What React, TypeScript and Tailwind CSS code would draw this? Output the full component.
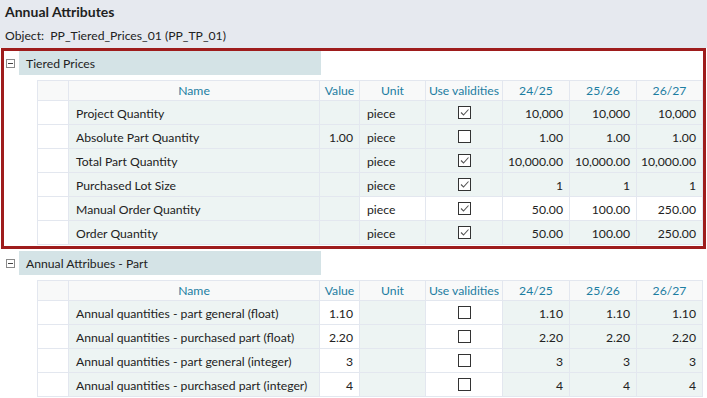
import React from 'react';

type Row = { name: string; value: string; unit: string; check: boolean; vals: string[]; whiteValue?: boolean; whiteUnit?: boolean; whiteCheck?: boolean; whiteVals?: boolean };

const tieredRows: Row[] = [
  { name: 'Project Quantity', value: '', unit: 'piece', check: true, vals: ['10,000', '10,000', '10,000'] },
  { name: 'Absolute Part Quantity', value: '1.00', unit: 'piece', check: false, vals: ['1.00', '1.00', '1.00'] },
  { name: 'Total Part Quantity', value: '', unit: 'piece', check: true, vals: ['10,000.00', '10,000.00', '10,000.00'] },
  { name: 'Purchased Lot Size', value: '', unit: 'piece', check: true, vals: ['1', '1', '1'] },
  { name: 'Manual Order Quantity', value: '', unit: 'piece', check: true, vals: ['50.00', '100.00', '250.00'], whiteUnit: true, whiteCheck: true, whiteVals: true },
  { name: 'Order Quantity', value: '', unit: 'piece', check: true, vals: ['50.00', '100.00', '250.00'] },
];

const partRows: Row[] = [
  { name: 'Annual quantities - part general (float)', value: '1.10', unit: '', check: false, vals: ['1.10', '1.10', '1.10'], whiteValue: true, whiteCheck: true },
  { name: 'Annual quantities - purchased part (float)', value: '2.20', unit: '', check: false, vals: ['2.20', '2.20', '2.20'], whiteValue: true, whiteCheck: true },
  { name: 'Annual quantities - part general (integer)', value: '3', unit: '', check: false, vals: ['3', '3', '3'], whiteValue: true, whiteCheck: true },
  { name: 'Annual quantities - purchased part (integer)', value: '4', unit: '', check: false, vals: ['4', '4', '4'], whiteValue: true, whiteCheck: true },
];

const line = 'border-r border-b border-[#e3e7ef]';

const CheckBox = ({ checked }: { checked: boolean }) => (
  <div className="w-[13px] h-[13px] border border-[#333] bg-white flex items-center justify-center">
    {checked && (
      <svg width="11" height="11" viewBox="0 0 11 11">
        <path d="M2 5.5 L4.5 8 L9.5 2.5" fill="none" stroke="#555" strokeWidth="1.1" />
      </svg>
    )}
  </div>
);

const Table = ({ rows }: { rows: Row[] }) => {
  const headers = ['Name', 'Value', 'Unit', 'Use validities', '24/25', '25/26', '26/27'];
  const bg = (white?: boolean) => (white ? 'bg-white' : 'bg-[#edf4f3]');
  return (
    <div className="grid grid-cols-[31px_251px_40px_66px_77px_67px_67px_66px] border-l border-t border-[#e3e7ef] w-[666px]">
      <div className={`${line} h-[20px] bg-[#f8f9f9]`} />
      {headers.map((h) => (
        <div key={h} className={`${line} h-[20px] leading-[20px] bg-[#f8f9f9] text-center text-[#1d7ea2] whitespace-nowrap`}>
          {h}
        </div>
      ))}
      {rows.map((r) => (
        <React.Fragment key={r.name}>
          <div className={`${line} h-[24px] bg-white`} />
          <div className={`${line} h-[24px] leading-[25px] ${bg()} pl-[7px] whitespace-nowrap`}>{r.name}</div>
          <div className={`${line} h-[24px] leading-[25px] ${bg(r.whiteValue)} text-right pr-[6px]`}>{r.value}</div>
          <div className={`${line} h-[24px] leading-[25px] ${bg(r.whiteUnit)} pl-[7px]`}>{r.unit}</div>
          <div className={`${line} h-[24px] ${bg(r.whiteCheck)} flex items-center justify-center`}>
            <CheckBox checked={r.check} />
          </div>
          {r.vals.map((v, i) => (
            <div key={i} className={`${line} h-[24px] leading-[25px] ${bg(r.whiteVals)} text-right pr-[6px] whitespace-nowrap`}>
              {v}
            </div>
          ))}
        </React.Fragment>
      ))}
    </div>
  );
};

const Group = ({ title, rows, inBox }: { title: string; rows: Row[]; inBox?: boolean }) => (
  <div>
    <div className={`flex items-center ${inBox ? 'pl-[2px]' : 'pl-[6px]'}`}>
      <div className="w-[9px] h-[9px] border border-[#8a8a8a] bg-white flex items-center justify-center">
        <div className="w-[5px] h-px bg-[#444]" />
      </div>
      <div className="ml-[4px] w-[302px] h-[24px] leading-[25px] bg-[#d4e3e6] pl-[7px] text-[#222]">{title}</div>
    </div>
    <div className={`mt-[5px] ${inBox ? 'ml-[33px]' : 'ml-[37px]'}`}>
      <Table rows={rows} />
    </div>
  </div>
);

export default function App() {
  return (
    <div className="w-[707px] h-[398px] bg-white text-[12.2px] text-[#222] overflow-hidden" style={{ fontFamily: 'Lato, "Open Sans", sans-serif' }}>
      <div className="h-[48px] bg-[#e6e9ef] px-[5px] pt-[1px]">
        <div className="text-[14px] font-bold text-[#1f1f1f] leading-[22px]">Annual Attributes</div>
        <div className="mt-[4px] leading-[18px]">Object:&nbsp; PP_Tiered_Prices_01 (PP_TP_01)</div>
      </div>
      <div className="ml-[1px] w-[705px] border-[3px] border-[#9e1c1c] pb-px">
        <Group title="Tiered Prices" rows={tieredRows} inBox />
      </div>
      <div className="mt-[2px]">
        <Group title="Annual Attribues - Part" rows={partRows} />
      </div>
    </div>
  );
}
